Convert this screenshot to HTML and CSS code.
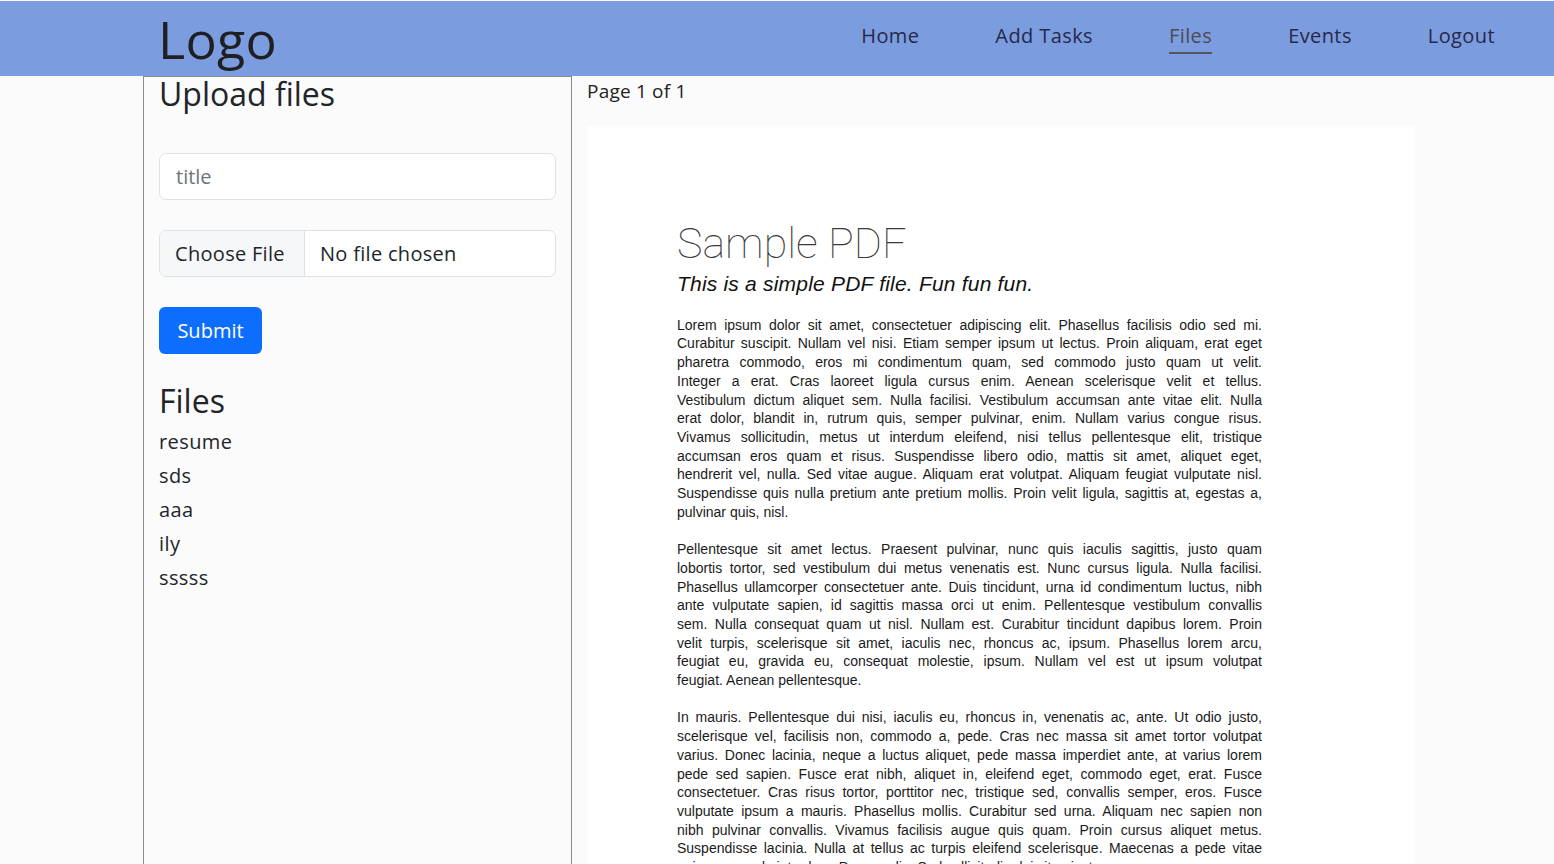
FILE: index.html
```html
<!DOCTYPE html>
<html lang="en">
<head>
<meta charset="utf-8">
<title>Files</title>
<link rel="stylesheet" href="styles.css">
</head>
<body>
<header class="topbar">
  <div class="logo">Logo</div>
  <nav class="nav">
    <a class="nav-link" href="#">Home</a>
    <a class="nav-link" href="#">Add Tasks</a>
    <a class="nav-link active" href="#">Files</a>
    <a class="nav-link" href="#">Events</a>
    <a class="nav-link" href="#">Logout</a>
  </nav>
</header>
<main class="main">
  <aside class="panel">
    <h2 class="panel-title">Upload files</h2>
    <div class="field"><span class="placeholder">title</span></div>
    <div class="file-field"><span class="file-btn">Choose File</span><span class="file-name">No file chosen</span></div>
    <button class="submit" type="button">Submit</button>
    <h2 class="files-title">Files</h2>
    <ul class="file-list">
      <li>resume</li>
      <li>sds</li>
      <li>aaa</li>
      <li>ily</li>
      <li>sssss</li>
    </ul>
  </aside>
  <section class="viewer">
    <div class="pager">Page 1 of 1</div>
    <div class="pdf-page">
      <div class="pdf-title">Sample PDF</div>
      <div class="pdf-sub">This is a simple PDF file. Fun fun fun.</div>
      <div class="pdf-body">
        <div class="para">
          <div class="ln">Lorem ipsum dolor sit amet, consectetuer adipiscing elit. Phasellus facilisis odio sed mi.</div>
          <div class="ln">Curabitur suscipit. Nullam vel nisi. Etiam semper ipsum ut lectus. Proin aliquam, erat eget</div>
          <div class="ln">pharetra commodo, eros mi condimentum quam, sed commodo justo quam ut velit.</div>
          <div class="ln">Integer a erat. Cras laoreet ligula cursus enim. Aenean scelerisque velit et tellus.</div>
          <div class="ln">Vestibulum dictum aliquet sem. Nulla facilisi. Vestibulum accumsan ante vitae elit. Nulla</div>
          <div class="ln">erat dolor, blandit in, rutrum quis, semper pulvinar, enim. Nullam varius congue risus.</div>
          <div class="ln">Vivamus sollicitudin, metus ut interdum eleifend, nisi tellus pellentesque elit, tristique</div>
          <div class="ln">accumsan eros quam et risus. Suspendisse libero odio, mattis sit amet, aliquet eget,</div>
          <div class="ln">hendrerit vel, nulla. Sed vitae augue. Aliquam erat volutpat. Aliquam feugiat vulputate nisl.</div>
          <div class="ln">Suspendisse quis nulla pretium ante pretium mollis. Proin velit ligula, sagittis at, egestas a,</div>
          <div class="ln last">pulvinar quis, nisl.</div>
        </div>
        <div class="para">
          <div class="ln">Pellentesque sit amet lectus. Praesent pulvinar, nunc quis iaculis sagittis, justo quam</div>
          <div class="ln">lobortis tortor, sed vestibulum dui metus venenatis est. Nunc cursus ligula. Nulla facilisi.</div>
          <div class="ln">Phasellus ullamcorper consectetuer ante. Duis tincidunt, urna id condimentum luctus, nibh</div>
          <div class="ln">ante vulputate sapien, id sagittis massa orci ut enim. Pellentesque vestibulum convallis</div>
          <div class="ln">sem. Nulla consequat quam ut nisl. Nullam est. Curabitur tincidunt dapibus lorem. Proin</div>
          <div class="ln">velit turpis, scelerisque sit amet, iaculis nec, rhoncus ac, ipsum. Phasellus lorem arcu,</div>
          <div class="ln">feugiat eu, gravida eu, consequat molestie, ipsum. Nullam vel est ut ipsum volutpat</div>
          <div class="ln last">feugiat. Aenean pellentesque.</div>
        </div>
        <div class="para">
          <div class="ln">In mauris. Pellentesque dui nisi, iaculis eu, rhoncus in, venenatis ac, ante. Ut odio justo,</div>
          <div class="ln">scelerisque vel, facilisis non, commodo a, pede. Cras nec massa sit amet tortor volutpat</div>
          <div class="ln">varius. Donec lacinia, neque a luctus aliquet, pede massa imperdiet ante, at varius lorem</div>
          <div class="ln">pede sed sapien. Fusce erat nibh, aliquet in, eleifend eget, commodo eget, erat. Fusce</div>
          <div class="ln">consectetuer. Cras risus tortor, porttitor nec, tristique sed, convallis semper, eros. Fusce</div>
          <div class="ln">vulputate ipsum a mauris. Phasellus mollis. Curabitur sed urna. Aliquam nec sapien non</div>
          <div class="ln">nibh pulvinar convallis. Vivamus facilisis augue quis quam. Proin cursus aliquet metus.</div>
          <div class="ln">Suspendisse lacinia. Nulla at tellus ac turpis eleifend scelerisque. Maecenas a pede vitae</div>
          <div class="ln last">enim commodo interdum. Donec odio. Sed sollicitudin dui vitae justo.</div>
        </div>
      </div>
    </div>
  </section>
</main>
</body>
</html>
```

FILE: styles.css
```css
* { box-sizing: border-box; }

html, body {
  margin: 0;
  padding: 0;
  height: 100%;
  overflow: hidden;
}

body {
  background: #fbfbfb;
  font-family: "Open Sans", "Liberation Sans", sans-serif;
  color: #212529;
  padding-top: 1px;
}

.topbar {
  height: 75px;
  background: #7b9ddf;
  display: flex;
  justify-content: space-between;
  align-items: flex-start;
  padding: 0 59px 0 159px;
}

.logo {
  font-size: 52px;
  line-height: 75px;
  color: #1f1f24;
  letter-spacing: 0.3px;
  margin-left: -1px;
}

.nav {
  display: flex;
  gap: 76px;
  padding-top: 20px;
}

.nav-link {
  display: block;
  font-size: 20px;
  line-height: 30px;
  color: #27284a;
  text-decoration: none;
  padding-bottom: 1px;
  border-bottom: 2px solid transparent;
  letter-spacing: 0.4px;
}

.nav-link.active {
  color: #4b4b52;
  border-bottom-color: #55555a;
}

.main {
  display: flex;
  align-items: stretch;
  height: calc(100% - 76px);
  padding-left: 143px;
}

.panel {
  width: 429px;
  flex: none;
  border: 1px solid #8c8c8c;
  background: #fbfbfc;
  padding: 2px 15px 0;
  height: 900px;
}

.panel-title {
  margin: 0 0 44px;
  font-size: 32px;
  line-height: 30px;
  font-weight: 500;
}

.field,
.file-field {
  height: 47px;
  border: 1px solid #dee2e6;
  border-radius: 7px;
  background: #fff;
  font-size: 20px;
  display: flex;
  align-items: center;
}

.field {
  padding: 0 16px;
  margin-bottom: 30px;
}

.placeholder {
  color: #6c757d;
}

.file-field {
  overflow: hidden;
  margin-bottom: 30px;
}

.file-btn {
  height: 100%;
  display: flex;
  align-items: center;
  width: 145px;
  padding-left: 15px;
  background: #f6f7f9;
  border-right: 1px solid #dee2e6;
  color: #212529;
  letter-spacing: 0.3px;
}

.file-name {
  padding-left: 15px;
  color: #212529;
  letter-spacing: 0.3px;
}

.submit {
  display: block;
  height: 47px;
  width: 103px;
  border: none;
  border-radius: 6px;
  background: #0d6efd;
  color: #fff;
  font-family: inherit;
  font-size: 20px;
  padding: 0;
  margin-bottom: 32px;
}

.files-title {
  margin: 0 0 9px;
  font-size: 32px;
  line-height: 30px;
  font-weight: 500;
}

.file-list {
  list-style: none;
  margin: 0;
  padding: 0;
}

.file-list li {
  font-size: 20px;
  line-height: 34px;
  font-weight: 500;
  letter-spacing: 0.4px;
}

.viewer {
  flex: none;
  width: 828px;
  margin-left: 15px;
}

.pager {
  height: 50px;
  font-size: 19px;
  line-height: 30px;
  color: #222;
  letter-spacing: 0.2px;
}

.pdf-page {
  background: #fff;
  height: 800px;
  padding: 92px 0 0 90px;
}

.pdf-title {
  font-family: Roboto, "Liberation Sans", sans-serif;
  font-weight: 100;
  font-size: 43px;
  line-height: 50px;
  color: #3a3a3a;
}

.pdf-sub {
  margin-top: 4px;
  font-family: "Liberation Sans", Arial, sans-serif;
  font-style: italic;
  font-size: 21px;
  line-height: 24px;
  color: #111;
  letter-spacing: 0.2px;
}

.pdf-body {
  margin-top: 19.7px;
  width: 585px;
  font-family: "Liberation Sans", Arial, sans-serif;
  font-size: 14px;
  line-height: 18.7px;
  color: #1a1a1a;
}

.para {
  margin-bottom: 18.7px;
}

.ln {
  white-space: nowrap;
  text-align: justify;
  text-align-last: justify;
}

.ln.last {
  text-align-last: left;
}
```
